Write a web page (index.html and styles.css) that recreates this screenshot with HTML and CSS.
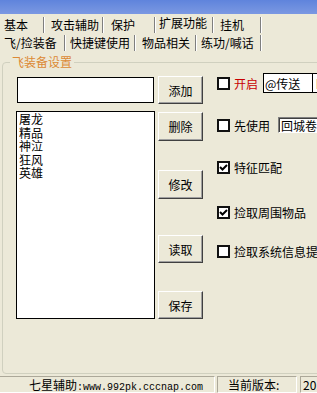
FILE: index.html
```html
<!DOCTYPE html>
<html lang="zh-CN">
<head>
  <meta charset="UTF-8" />
  <meta name="viewport" content="width=device-width, initial-scale=1.0" />
  <title>七星辅助</title>
  <link rel="stylesheet" href="styles.css">
</head>
<body>
  <div class="titlebar"></div>

  <div class="tabs">
    <div class="tab-row row-top">
      <span class="tab w44 first">基本</span>
      <span class="tab w59">攻击辅助</span>
      <span class="tab w52 wide">保护</span>
      <span class="tab w58 on">扩展功能</span>
      <span class="tab w48">挂机</span>
    </div>
    <div class="tab-row row-bottom">
      <span class="tab w65 first">飞/捡装备</span>
      <span class="tab w70 narrow">快捷键使用</span>
      <span class="tab w61">物品相关</span>
      <span class="tab w65 narrow">练功/喊话</span>
    </div>
  </div>

  <div class="panel">
    <fieldset class="group">
      <legend>飞装备设置</legend>
      <div class="cols">
        <div class="col-list">
          <input class="name-input" type="text" value="" />
          <ul class="list">
            <li>屠龙</li>
            <li>精品</li>
            <li>神泣</li>
            <li>狂风</li>
            <li>英雄</li>
          </ul>
        </div>

        <div class="col-btns">
          <button class="btn b-add">添加</button>
          <button class="btn b-del">删除</button>
          <button class="btn b-edit">修改</button>
          <button class="btn b-read">读取</button>
          <button class="btn b-save">保存</button>
        </div>

        <div class="col-opts">
          <div class="opt opt-open">
            <span class="cb"></span>
            <span class="red">开启</span>
            <input class="field field-tp" type="text" value="@传送" />
            <input class="field field-next" type="text" value="巨" />
          </div>
          <div class="opt opt-first">
            <span class="cb"></span>
            <span>先使用</span>
            <input class="field sunken" type="text" value="回城卷" />
          </div>
          <div class="opt opt-match">
            <span class="cb"><svg width="9" height="9" viewBox="0 0 9 9"><path d="M1 4 L3.5 6.5 L8 2" fill="none" stroke="#000" stroke-width="2"/></svg></span>
            <span>特征匹配</span>
          </div>
          <div class="opt opt-pick">
            <span class="cb"><svg width="9" height="9" viewBox="0 0 9 9"><path d="M1 4 L3.5 6.5 L8 2" fill="none" stroke="#000" stroke-width="2"/></svg></span>
            <span>捡取周围物品</span>
          </div>
          <div class="opt opt-sys">
            <span class="cb"></span>
            <span>捡取系统信息提示</span>
          </div>
        </div>
      </div>
    </fieldset>
  </div>

  <div class="statusbar">
    <div class="sb-cell sb-site">七星辅助<span class="mono">:www.992pk.cccnap.com</span></div>
    <div class="sb-cell sb-ver">当前版本:</div>
    <div class="sb-cell sb-num">2010</div>
  </div>
</body>
</html>
```

FILE: styles.css
```css
body {
  margin: 0;
  width: 317px;
  height: 393px;
  overflow: hidden;
  background: #ece9d8;
  color: #000;
  font-family: "Noto Sans CJK SC", "Liberation Sans", sans-serif;
  font-size: 12px;
}

.titlebar {
  height: 14px;
  background: linear-gradient(#5f84dc, #7b98e2);
}

/* tabs */
.tab-row {
  display: flex;
  align-items: flex-start;
}
.row-top { height: 19px; }
.row-bottom { height: 20px; }
.tab {
  flex: none;
  box-sizing: border-box;
  padding-left: 7px;
  white-space: nowrap;
  border-right: 1px solid #7f7f7f;
  box-shadow: 1px 0 0 #fff;
}
.row-top .tab { margin-top: 3px; line-height: 16px; }
.row-top .tab.on { line-height: 12px; padding-bottom: 4px; padding-left: 4px; }
.row-bottom .tab { margin-top: 2px; line-height: 16px; }
.tab.first { padding-left: 4px; }
.tab.wide { padding-left: 8px; }
.tab.narrow { padding-left: 5px; }
.w44 { width: 44px; }
.w59 { width: 59px; }
.w52 { width: 52px; }
.w58 { width: 58px; }
.w48 { width: 48px; }
.w65 { width: 65px; }
.w70 { width: 70px; }
.w61 { width: 61px; }

/* panel + group */
.panel {
  height: 323px;
  overflow: hidden;
}
.group {
  box-sizing: border-box;
  margin: 3px 0 0 2px;
  padding: 0;
  min-width: 0;
  width: 330px;
  height: 318px;
  border: 1px solid #d0d0bf;
  border-radius: 4px;
}
.group legend {
  margin-left: 7px;
  padding: 0 2px;
  line-height: 12px;
  color: #dc8a35;
}

.cols {
  display: flex;
  align-items: flex-start;
  padding-left: 13px;
}

.col-list {
  flex: none;
  width: 139px;
  display: flex;
  flex-direction: column;
}
.name-input {
  box-sizing: border-box;
  margin: 9px 0 0 1px;
  width: 137px;
  height: 26px;
  border: 1px solid #000;
  background: #fff;
  padding: 0 2px;
  font: inherit;
  outline: none;
}
.list {
  box-sizing: border-box;
  margin: 8px 0 0;
  height: 208px;
  padding: 0 2px;
  list-style: none;
  border: 1px solid #000;
  background: #fff;
}
.list li {
  line-height: 14px;
  margin-bottom: -0.5px;
}

.col-btns {
  flex: none;
  display: flex;
  flex-direction: column;
  margin-left: 3px;
}
.btn {
  box-sizing: border-box;
  width: 45px;
  height: 28px;
  padding: 0;
  font: inherit;
  color: #000;
  background: #ece9d8;
  border: 1px solid;
  border-color: #fff #404040 #404040 #fff;
  box-shadow: inset -1px -1px 0 #a0a0a0;
}
.b-add { margin-top: 8px; }
.b-del { margin-top: 8px; height: 29px; }
.b-edit { margin-top: 29px; height: 29px; }
.b-read { margin-top: 36px; }
.b-save { margin-top: 28px; }

.col-opts {
  flex: none;
  display: flex;
  flex-direction: column;
  margin-left: 14px;
}
.opt {
  display: flex;
  align-items: center;
  gap: 4px;
  white-space: nowrap;
  height: 13px;
  line-height: 13px;
}
.cb {
  box-sizing: border-box;
  flex: none;
  display: flex;
  align-items: center;
  justify-content: center;
  width: 13px;
  height: 13px;
  border: 2px solid #111;
  background: #fff;
}
.red { color: #c80000; }

.opt-open { margin-top: 5px; height: 20px; }
.opt-first { margin-top: 24px; height: 16px; }
.opt-match { margin-top: 28px; }
.opt-pick { margin-top: 32px; }
.opt-sys { margin-top: 26px; }

.field {
  flex: none;
  box-sizing: border-box;
  font: inherit;
  padding: 0 1px;
  background: #fff;
  color: #000;
  outline: none;
}
.field-tp {
  margin-left: 1px;
  width: 50px;
  height: 20px;
  border: 1px solid #000;
}
.field-next {
  margin-left: -5px;
  width: 40px;
  height: 20px;
  border: 1px solid #000;
  padding-left: 2px;
}
.sunken {
  margin-left: 4px;
  width: 60px;
  height: 16px;
  padding-left: 2px;
  border: 1px solid;
  border-color: #808080 #fff #fff #808080;
  box-shadow: inset 1px 1px 0 #404040;
}

/* status bar */
.statusbar {
  display: flex;
  height: 17px;
}
.sb-cell {
  flex: none;
  box-sizing: border-box;
  height: 17px;
  line-height: 15px;
  margin-left: 2px;
  border: 1px solid;
  border-color: #aca899 #fff #fff #aca899;
  white-space: nowrap;
  overflow: hidden;
}
.sb-site {
  margin-left: 0;
  width: 215px;
  padding-left: 29px;
  border-left: 0;
}
.sb-ver {
  width: 80px;
  padding-left: 10px;
}
.sb-num {
  margin-left: 3px;
  width: 40px;
  padding-left: 2px;
}
.mono {
  font-family: "Liberation Mono", monospace;
  font-size: 10px;
}
```
